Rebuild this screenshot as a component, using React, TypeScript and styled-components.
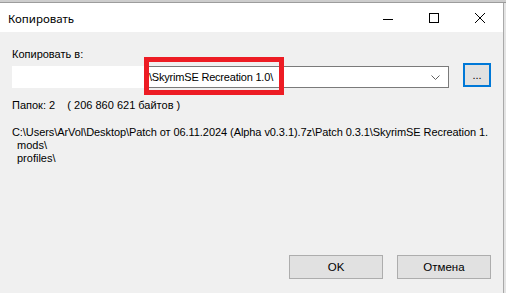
import React from "react";
import styled, { createGlobalStyle } from "styled-components";

const Global = createGlobalStyle`
  html, body { margin: 0; padding: 0; background: #e4e4e4; }
  body { width: 506px; height: 293px; overflow: hidden; }
  #root { width: 506px; height: 293px; }
`;

const Screen = styled.div`
  position: relative;
  width: 506px;
  height: 293px;
  display: flex;
  flex-direction: column;
  background: #e4e4e4;
`;

const BehindStrip = styled.div`
  height: 2px;
  background: #cdcdcd;
  border-bottom: 1px solid #9c9c9c;
  flex: none;
`;

const Window = styled.div`
  width: 503px;
  flex: 1;
  display: flex;
  flex-direction: column;
  border-right: 1px solid #a9a9a9;
  background: #f0f0f0;
`;

const TitleBar = styled.div`
  height: 29px;
  background: #ffffff;
  display: flex;
  align-items: center;
  flex: none;
`;

const Title = styled.div`
  flex: 1;
  padding-left: 8px;
  padding-top: 1px;
  font-family: "Noto Sans", "Open Sans", sans-serif;
  font-size: 11.5px;
  color: #000;
`;

const CaptionButton = styled.div`
  width: 46px;
  height: 29px;
  display: flex;
  align-items: center;
  justify-content: center;
`;

const Client = styled.div`
  flex: 1;
  display: flex;
  flex-direction: column;
  padding: 16px 12px 14px 12px;
  font-family: "Liberation Sans", Arial, sans-serif;
  font-size: 11px;
  color: #000;
`;

const Label = styled.div<{ $top?: number; $indent?: number; $tight?: boolean }>`
  line-height: 13px;
  height: 13px;
  white-space: pre;
  overflow: hidden;
  margin-top: ${(p) => p.$top ?? 0}px;
  padding-left: ${(p) => p.$indent ?? 0}px;
  letter-spacing: ${(p) => (p.$tight ? "-0.07px" : "0")};
`;

const ComboRow = styled.div`
  display: flex;
  gap: 14px;
  margin-top: 2px;
  align-items: flex-start;
`;

const Combo = styled.div`
  position: relative;
  flex: 1;
  height: 22px;
  margin-top: 3px;
  box-sizing: border-box;
  background: #fff;
  border: 1px solid #7a7a7a;
  display: flex;
  align-items: center;
  padding-left: 136px;
  font-family: "Liberation Sans", Arial, sans-serif;
  font-size: 11px;
  letter-spacing: -0.2px;

  &::before {
    content: "";
    position: absolute;
    left: -1px;
    top: -1px;
    bottom: -1px;
    width: 133px;
    background: #fff;
  }
`;

const ComboText = styled.span`
  flex: 1;
  white-space: pre;
`;

const Chevron = styled.div`
  width: 22px;
  display: flex;
  align-items: center;
  justify-content: center;
  padding-right: 2px;
`;

const BrowseButton = styled.div`
  width: 28px;
  height: 24px;
  box-sizing: border-box;
  border: 2px solid #0078d7;
  background: #e1e1e1;
  display: flex;
  align-items: center;
  justify-content: center;
  font-size: 11px;
  padding-bottom: 1px;
`;

const PathBlock = styled.div`
  margin-top: 14px;
  display: flex;
  flex-direction: column;
`;

const ButtonRow = styled.div`
  margin-top: auto;
  display: flex;
  justify-content: flex-end;
  gap: 14px;
`;

const DialogButton = styled.div`
  width: 94px;
  height: 24px;
  box-sizing: border-box;
  border: 1px solid #adadad;
  background: #e1e1e1;
  display: flex;
  align-items: center;
  justify-content: center;
  font-size: 11.5px;
`;

const Highlight = styled.div`
  position: absolute;
  left: 144px;
  top: 57px;
  width: 140px;
  height: 38px;
  box-sizing: border-box;
  border: 5px solid #ed1c24;
  pointer-events: none;
`;

export default function App() {
  return (
    <>
      <Global />
      <Screen>
        <BehindStrip />
        <Window>
          <TitleBar>
            <Title>Копировать</Title>
            <CaptionButton>
              <svg width="10" height="10" viewBox="0 0 10 10">
                <path d="M0 6.5H10" stroke="#000" strokeWidth="1" />
              </svg>
            </CaptionButton>
            <CaptionButton>
              <svg width="10" height="10" viewBox="0 0 10 10">
                <rect x="0.5" y="0.5" width="9" height="9" fill="none" stroke="#000" strokeWidth="1" />
              </svg>
            </CaptionButton>
            <CaptionButton>
              <svg width="10" height="10" viewBox="0 0 10 10">
                <path d="M0 0L10 10M10 0L0 10" stroke="#000" strokeWidth="1" />
              </svg>
            </CaptionButton>
          </TitleBar>
          <Client>
            <Label>Копировать в:</Label>
            <ComboRow>
              <Combo>
                <ComboText>\SkyrimSE Recreation 1.0\</ComboText>
                <Chevron>
                  <svg width="9" height="5" viewBox="0 0 9 5">
                    <path d="M0.5 0.5L4.5 4.5L8.5 0.5" fill="none" stroke="#606060" strokeWidth="1" />
                  </svg>
                </Chevron>
              </Combo>
              <BrowseButton>...</BrowseButton>
            </ComboRow>
            <Label $top={11}>Папок: 2    ( 206 860 621 байтов )</Label>
            <PathBlock>
              <Label $tight>C:\Users\ArVol\Desktop\Patch от 06.11.2024 (Alpha v0.3.1).7z\Patch 0.3.1\SkyrimSE Recreation 1.</Label>
              <Label $indent={5}>mods\</Label>
              <Label $indent={5}>profiles\</Label>
            </PathBlock>
            <ButtonRow>
              <DialogButton>OK</DialogButton>
              <DialogButton>Отмена</DialogButton>
            </ButtonRow>
          </Client>
        </Window>
        <Highlight />
      </Screen>
    </>
  );
}
